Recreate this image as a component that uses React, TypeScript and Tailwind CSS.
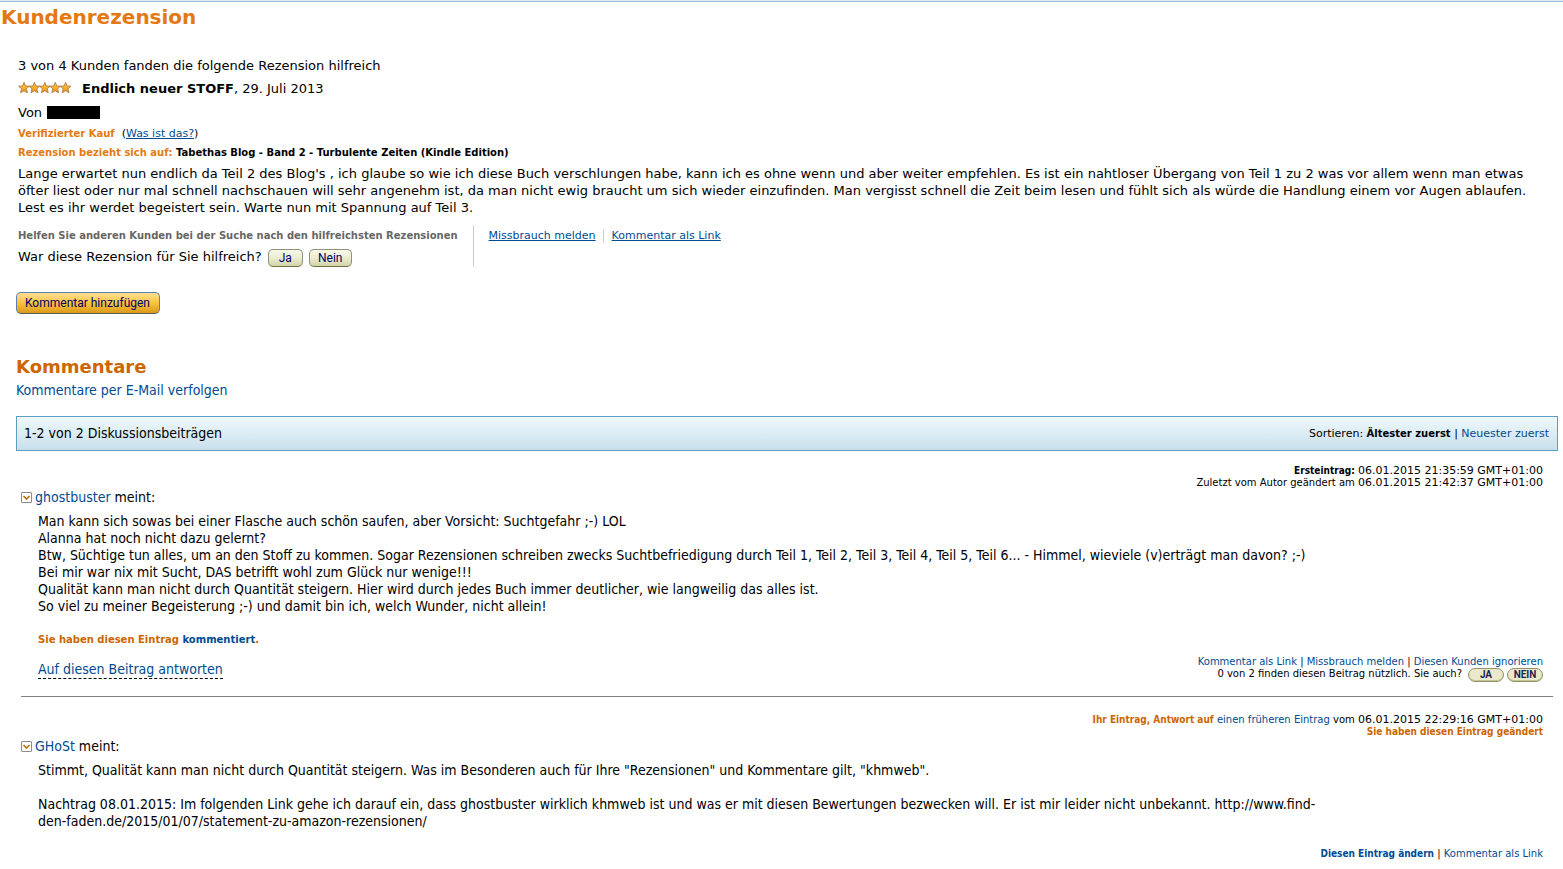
import React from 'react';
import clsx from 'clsx';

const linkClass = 'text-[#004b91] hover:underline';
const metaClass = "font-['DejaVu_Sans',sans-serif] text-[10px]";
const condensedBold = "font-['DejaVu_Sans_Condensed','DejaVu_Sans',sans-serif] font-bold";

const reviewLines = [
  "Lange erwartet nun endlich da Teil 2 des Blog's , ich glaube so wie ich diese Buch verschlungen habe, kann ich es ohne wenn und aber weiter empfehlen. Es ist ein nahtloser Übergang von Teil 1 zu 2 was vor allem wenn man etwas",
  'öfter liest oder nur mal schnell nachschauen will sehr angenehm ist, da man nicht ewig braucht um sich wieder einzufinden. Man vergisst schnell die Zeit beim lesen und fühlt sich als würde die Handlung einem vor Augen ablaufen.',
  'Lest es ihr werdet begeistert sein. Warte nun mit Spannung auf Teil 3.',
];

const firstComment = [
  'Man kann sich sowas bei einer Flasche auch schön saufen, aber Vorsicht: Suchtgefahr ;-) LOL',
  'Alanna hat noch nicht dazu gelernt?',
  'Btw, Süchtige tun alles, um an den Stoff zu kommen. Sogar Rezensionen schreiben zwecks Suchtbefriedigung durch Teil 1, Teil 2, Teil 3, Teil 4, Teil 5, Teil 6... - Himmel, wieviele (v)erträgt man davon? ;-)',
  'Bei mir war nix mit Sucht, DAS betrifft wohl zum Glück nur wenige!!!',
  'Qualität kann man nicht durch Quantität steigern. Hier wird durch jedes Buch immer deutlicher, wie langweilig das alles ist.',
  'So viel zu meiner Begeisterung ;-) und damit bin ich, welch Wunder, nicht allein!',
];

const secondComment = [
  'Stimmt, Qualität kann man nicht durch Quantität steigern. Was im Besonderen auch für Ihre "Rezensionen" und Kommentare gilt, "khmweb".',
  '',
  'Nachtrag 08.01.2015: Im folgenden Link gehe ich darauf ein, dass ghostbuster wirklich khmweb ist und was er mit diesen Bewertungen bezwecken will. Er ist mir leider nicht unbekannt. http://www.find-',
  'den-faden.de/2015/01/07/statement-zu-amazon-rezensionen/',
];

const Lines: React.FC<{ lines: string[]; className?: string }> = ({ lines, className }) => (
  <p className={className}>
    {lines.map((line, index) => (
      <span key={index} className="block min-h-[17px] whitespace-nowrap">{line}</span>
    ))}
  </p>
);

const Stars: React.FC = () => (
  <svg width="54" height="14" viewBox="0 0 54 14" role="img" aria-label="5 von 5 Sternen">
    <defs>
      <linearGradient id="star" x1="0" y1="0" x2="0" y2="1">
        <stop offset="0" stopColor="#ffc95a" />
        <stop offset="0.5" stopColor="#fbb02c" />
        <stop offset="1" stopColor="#e2881a" />
      </linearGradient>
    </defs>
    {[0, 1, 2, 3, 4].map(i => (
      <path
        key={i}
        transform={`translate(${i * 10.4} 0)`}
        d="M6 .4 7.5 4 11.3 4.2 8.4 6.8 9.4 10.8 6 8.7 2.6 10.8 3.6 6.8 .7 4.2 4.5 4Z"
        fill="url(#star)"
        stroke="#b5854a"
        strokeWidth="1"
        strokeLinejoin="round"
      />
    ))}
  </svg>
);

const VoteButton: React.FC<{ children: React.ReactNode; className?: string }> = ({ children, className }) => (
  <button
    type="button"
    className={clsx(
      "flex h-[18px] items-center justify-center rounded-[5px] border border-[#8c9178] border-b-[#6d7444] bg-linear-to-b from-[#f8f8ea] via-[#ebebd0] to-[#d2d3a8] font-[Roboto,sans-serif] text-[12px] leading-4 text-[#000066]",
      className,
    )}
  >
    {children}
  </button>
);

const PillButton: React.FC<{ children: React.ReactNode }> = ({ children }) => (
  <button
    type="button"
    className="flex h-[14px] w-9 items-center justify-center rounded-full border border-[#8f926a] bg-[#ebe9c9] font-[Roboto,sans-serif] text-[10px] leading-3 font-bold text-[#22225a] shadow-[inset_0_-1px_0_#c4c391]"
  >
    {children}
  </button>
);

const Author: React.FC<{ name: string }> = ({ name }) => (
  <div className="flex items-center gap-[3px] leading-4">
    <button type="button" aria-label={`Beitrag von ${name} ausblenden`} className="h-[11px] w-[11px]">
      <svg width="11" height="11" viewBox="0 0 11 11" fill="none">
        <rect x="0.5" y="0.5" width="10" height="10" rx="0.5" fill="#fff" stroke="#8c8c8c" />
        <path d="M2.5 4 5.5 7 8.5 4" stroke="#b8700f" strokeWidth="1.6" />
      </svg>
    </button>
    <p><a href="#" className={linkClass}>{name}</a> meint:</p>
  </div>
);

export default function App() {
  return (
    <div className="overflow-x-hidden border-t border-[#dfeaf5] bg-white font-['DejaVu_Sans',sans-serif] text-[13px] leading-[17px] text-black">
      <div className="h-px bg-[#9fbcd8]" />
      <h1 className="mt-[3px] ml-px text-xl leading-6 font-bold text-[#e47911]">Kundenrezension</h1>

      <section className="mt-7 pr-3 pl-[18px]">
        <p>3 von 4 Kunden fanden die folgende Rezension hilfreich</p>
        <div className="mt-1.5 flex items-center gap-2.5">
          <Stars />
          <p><b>Endlich neuer STOFF</b>, 29. Juli 2013</p>
        </div>
        <div className="mt-[7px] flex items-center gap-[5px]">
          <span>Von</span>
          <span className="h-[13px] w-[53px] bg-black" />
        </div>
        <p className="mt-[5px] flex gap-[7px] text-[11px] leading-[15px]">
          <b className="text-[10px] text-[#e47911]">Verifizierter Kauf</b>
          <span>(<a href="#" className="text-[#004b91] underline">Was ist das?</a>)</span>
        </p>
        <p className="mt-[5px] text-[10px] leading-[14px] font-bold">
          <span className="text-[#e47911]">Rezension bezieht sich auf:</span> Tabethas Blog - Band 2 - Turbulente Zeiten (Kindle Edition)
        </p>
        <Lines lines={reviewLines} className="mt-[5px]" />

        <div className="mt-[9px] flex text-[10px] leading-[14px]">
          <div className="border-r border-[#ccc] pr-[15px]">
            <p className="mt-1 font-bold text-[#666]">Helfen Sie anderen Kunden bei der Suche nach den hilfreichsten Rezensionen</p>
            <div className="mt-1.5 flex items-start gap-1.5 text-[13px] leading-4">
              <span>War diese Rezension für Sie hilfreich?</span>
              <VoteButton className="w-[35px]">Ja</VoteButton>
              <VoteButton className="w-[43px]">Nein</VoteButton>
            </div>
          </div>
          <div className="mt-1 ml-[15px] flex h-[14px] text-[11px]">
            <a href="#" className="text-[#004b91] underline">Missbrauch melden</a>
            <a href="#" className="ml-[7px] border-l border-[#ccc] pl-2 text-[#004b91] underline">Kommentar als Link</a>
          </div>
        </div>
      </section>

      <section className="mt-[25px] pr-[5px] pl-4 font-['DejaVu_Sans_Condensed','DejaVu_Sans',sans-serif] text-[14px] leading-[17px]">
        <button
          type="button"
          className="flex h-[22px] w-36 items-center rounded-[5px] border border-[#5f7fae] border-b-[#5b5b52] bg-linear-to-b from-[#ffdf91] via-[#fdc23a] to-[#d99a1c] pl-2 font-[Roboto,sans-serif] text-[12px] leading-4 whitespace-nowrap text-[#000066]"
        >
          Kommentar hinzufügen
        </button>
        <h2 className="mt-[42px] font-['DejaVu_Sans',sans-serif] text-lg leading-[22px] font-bold text-[#c60]">Kommentare</h2>
        <p className="mt-1"><a href="#" className={linkClass}>Kommentare per E-Mail verfolgen</a></p>

        <div className="mt-[17px] flex h-[35px] items-center justify-between border border-[#5c9ebf] bg-linear-to-b from-[#eff9fd] to-[#c8dfeb] pr-2 pl-[7px]">
          <p>1-2 von 2 Diskussionsbeiträgen</p>
          <p className="font-['DejaVu_Sans',sans-serif] text-[11px] leading-4">
            Sortieren: <b className="text-[10px]">Ältester zuerst</b> | <a href="#" className={linkClass}>Neuester zuerst</a>
          </p>
        </div>

        <article className="mt-[14px] mr-[5px] ml-[5px] border-b border-[#808080] pb-[14px]">
          <div className={clsx(metaClass, 'pr-2.5 text-right leading-3')}>
            <p><b className={condensedBold}>Ersteintrag:</b> <span className="text-[11px]">06.01.2015 21:35:59 GMT+01:00</span></p>
            <p>Zuletzt vom Autor geändert am <span className="text-[11px]">06.01.2015 21:42:37 GMT+01:00</span></p>
          </div>
          <Author name="ghostbuster" />
          <div className="pr-2.5 pl-[17px]">
            <Lines lines={firstComment} className="mt-2" />
            <p className={clsx(metaClass, 'mt-[18px] leading-[14px] font-bold text-[#c60]')}>
              Sie haben diesen Eintrag <a href="#" className={linkClass}>kommentiert</a>.
            </p>
            <div className="mt-[9px] flex items-start justify-between">
              <a href="#" className="mt-[5px] border-b border-dashed border-black text-[#004b91]">Auf diesen Beitrag antworten</a>
              <div className={clsx(metaClass, 'text-right leading-3')}>
                <p>
                  <a href="#" className={linkClass}>Kommentar als Link</a> | <a href="#" className={linkClass}>Missbrauch melden</a> | <a href="#" className={linkClass}>Diesen Kunden ignorieren</a>
                </p>
                <div className="flex justify-end gap-[3px]">
                  <span className="mr-[3px]">0 von 2 finden diesen Beitrag nützlich. Sie auch?</span>
                  <PillButton>JA</PillButton>
                  <PillButton>NEIN</PillButton>
                </div>
              </div>
            </div>
          </div>
        </article>

        <article className="mt-[17px] mr-[5px] ml-[5px]">
          <div className={clsx(metaClass, 'pr-2.5 text-right leading-3')}>
            <p>
              <b className={clsx(condensedBold, 'text-[#c60]')}>Ihr Eintrag, Antwort auf</b> <a href="#" className={linkClass}>einen früheren Eintrag</a> vom <span className="text-[11px]">06.01.2015 22:29:16 GMT+01:00</span>
            </p>
            <p className={clsx(condensedBold, 'text-[#c60]')}>Sie haben diesen Eintrag geändert</p>
          </div>
          <Author name="GHoSt" />
          <Lines lines={secondComment} className="mt-2 pl-[17px]" />
          <p className={clsx(metaClass, 'mt-[18px] pr-2.5 text-right leading-3')}>
            <a href="#" className={clsx(condensedBold, linkClass)}>Diesen Eintrag ändern</a> | <a href="#" className={linkClass}>Kommentar als Link</a>
          </p>
        </article>
      </section>
    </div>
  );
}
